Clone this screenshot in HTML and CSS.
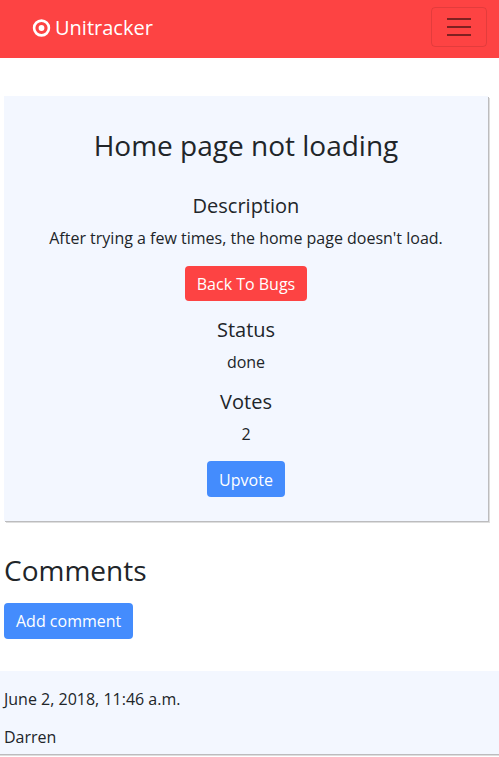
FILE: index.html
```html
<!DOCTYPE html>
<html lang="en">
<head>
<meta charset="utf-8">
<title>Unitracker</title>
<link rel="stylesheet" href="styles.css">
</head>
<body>
<nav class="navbar">
  <a class="brand"><svg class="logo" viewBox="0 0 18 18"><circle cx="9.5" cy="9" r="7.4" fill="none" stroke="#fff" stroke-width="2.6"/><circle cx="9.5" cy="9" r="2.9" fill="#fff"/></svg>Unitracker</a>
  <button class="toggler" aria-label="Toggle navigation"><svg class="bars" viewBox="0 0 30 30"><path stroke="rgba(0,0,0,.5)" stroke-width="2" stroke-miterlimit="10" d="M3 7h24M3 15h24M3 23h24"/></svg></button>
</nav>
<main>
  <section class="ticket">
    <h2>Home page not loading</h2>
    <h5>Description</h5>
    <p>After trying a few times, the home page doesn't load.</p>
    <a class="btn btn-red">Back To Bugs</a>
    <h5 class="after-button">Status</h5>
    <p>done</p>
    <h5>Votes</h5>
    <p>2</p>
    <a class="btn">Upvote</a>
  </section>
  <section class="comments">
    <h3>Comments</h3>
    <a class="btn">Add comment</a>
    <article class="comment">
      <p>June 2, 2018, 11:46 a.m.</p>
      <p>Darren</p>
    </article>
  </section>
</main>
</body>
</html>
```
FILE: styles.css
```css
* { box-sizing: border-box; }
body {
  height: 757px;
  margin: 0;
  overflow: hidden;
  font: 16px/24px "Open Sans", sans-serif;
  color: #212529;
  background: #fff;
}
.navbar {
  display: flex;
  align-items: center;
  justify-content: space-between;
  height: 58px;
  padding: 0 12px 4px 32px;
  background: #fd4343;
}
.brand {
  display: flex;
  align-items: center;
  gap: 5px;
  padding-top: 2px;
  font-size: 20px;
  line-height: 30px;
  color: #fff;
}
.logo { width: 18px; height: 18px; overflow: visible; }
.toggler {
  width: 56px;
  height: 40px;
  padding: 4px 12px;
  border: 1px solid rgba(0, 0, 0, .1);
  border-radius: 4px;
  background: transparent;
}
.bars { display: block; width: 30px; height: 30px; }
.ticket {
  height: 425px;
  margin: 38px 11px 0 4px;
  padding: 32px 0 0;
  text-align: center;
  background: #f3f7ff;
  box-shadow: 1px 1px 0 #bcbcbe, 2px 2px 0 #dedede;
}
h2, h3, h5, p { margin: 0; font-weight: 400; }
h2 { margin-bottom: 32px; font-size: 28px; line-height: 34px; }
h3 { margin-bottom: 16px; font-size: 28px; line-height: 34px; }
h5 { margin-bottom: 8px; font-size: 20px; line-height: 24px; }
p { margin-bottom: 16px; }
.btn {
  display: inline-block;
  height: 36px;
  padding: 6px 12px;
  border-radius: 4px;
  background: #448cfd;
  color: #fff;
  vertical-align: top;
}
.btn-red { height: 35px; background: #fd4343; }
.after-button { margin-top: 17px; }
.ticket p + .btn:last-child { margin-top: -1px; padding-top: 7px; }
.comments { padding-top: 32px; }
.comments h3, .comments > .btn { margin-left: 4px; }
.comment {
  height: 83px;
  margin-top: 32px;
  padding: 16px 4px 0;
  background: #f3f7ff;
  box-shadow: 0 1px 0 #bcbcbe, 0 2px 0 #dedede;
}
.comment p { margin-bottom: 14px; }
```
